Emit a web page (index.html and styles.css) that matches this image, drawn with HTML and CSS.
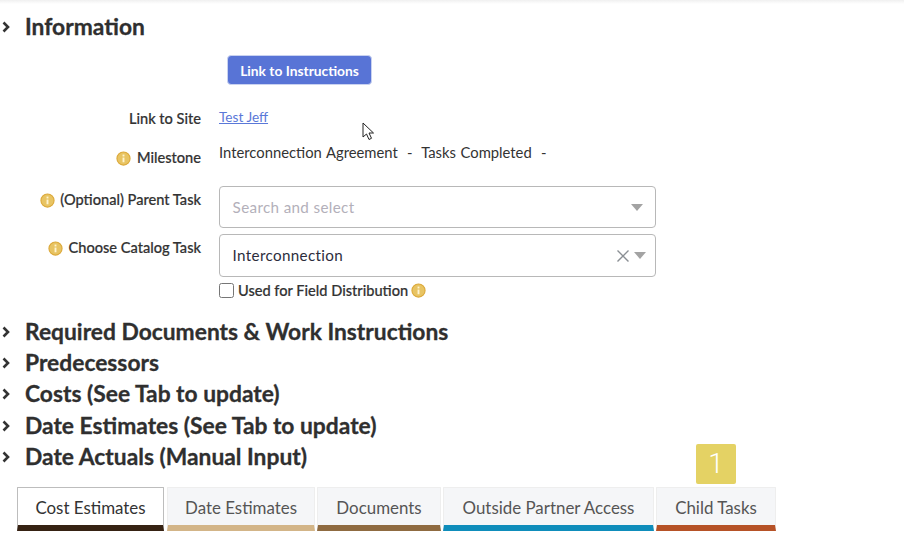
FILE: index.html
```html
<!DOCTYPE html>
<html lang="en">

<head>
    <meta charset="UTF-8">
    <title>Task Details</title>
    <link rel="stylesheet" href="styles.css">
</head>

<body>
    <div class="top-shadow"></div>

    <div class="section first">
        <svg class="chevron" viewBox="0 0 8 12"><path d="M1.5 1.5 L6 6 L1.5 10.5"/></svg>
        <h2>Information</h2>
    </div>

    <div class="form">
        <div class="row row-button">
            <div class="label"></div>
            <button class="btn-primary">Link to Instructions</button>
        </div>
        <div class="row row-site">
            <div class="label">Link to Site</div>
            <a class="value" href="#">Test Jeff</a>
        </div>
        <div class="row row-milestone">
            <div class="label">
                <svg class="info" viewBox="0 0 16 16"><circle cx="8" cy="8" r="7"/><rect x="7" y="7" width="2" height="5"/><rect x="7" y="3.8" width="2" height="2"/></svg>
                Milestone
            </div>
            <div class="value">Interconnection Agreement&nbsp; -&nbsp; Tasks Completed&nbsp; -</div>
        </div>
        <div class="row row-parent">
            <div class="label">
                <svg class="info" viewBox="0 0 16 16"><circle cx="8" cy="8" r="7"/><rect x="7" y="7" width="2" height="5"/><rect x="7" y="3.8" width="2" height="2"/></svg>
                (Optional) Parent Task
            </div>
            <div class="select">
                <span class="placeholder">Search and select</span>
                <span class="caret"></span>
            </div>
        </div>
        <div class="row row-catalog">
            <div class="label">
                <svg class="info" viewBox="0 0 16 16"><circle cx="8" cy="8" r="7"/><rect x="7" y="7" width="2" height="5"/><rect x="7" y="3.8" width="2" height="2"/></svg>
                Choose Catalog Task
            </div>
            <div class="select">
                <span class="selected">Interconnection</span>
                <svg class="clear" viewBox="0 0 12 12"><path d="M0.5 0.5 L11.5 11.5 M11.5 0.5 L0.5 11.5"/></svg>
                <span class="caret caret-near"></span>
            </div>
        </div>
        <div class="row row-check">
            <div class="label"></div>
            <label class="check">
                <input type="checkbox">
                <span>Used for Field Distribution</span>
                <svg class="info" viewBox="0 0 16 16"><circle cx="8" cy="8" r="7"/><rect x="7" y="7" width="2" height="5"/><rect x="7" y="3.8" width="2" height="2"/></svg>
            </label>
        </div>
    </div>

    <div class="sections">
        <div class="section">
            <svg class="chevron" viewBox="0 0 8 12"><path d="M1.5 1.5 L6 6 L1.5 10.5"/></svg>
            <h2>Required Documents &amp; Work Instructions</h2>
        </div>
        <div class="section">
            <svg class="chevron" viewBox="0 0 8 12"><path d="M1.5 1.5 L6 6 L1.5 10.5"/></svg>
            <h2>Predecessors</h2>
        </div>
        <div class="section">
            <svg class="chevron" viewBox="0 0 8 12"><path d="M1.5 1.5 L6 6 L1.5 10.5"/></svg>
            <h2>Costs (See Tab to update)</h2>
        </div>
        <div class="section">
            <svg class="chevron" viewBox="0 0 8 12"><path d="M1.5 1.5 L6 6 L1.5 10.5"/></svg>
            <h2>Date Estimates (See Tab to update)</h2>
        </div>
        <div class="section">
            <svg class="chevron" viewBox="0 0 8 12"><path d="M1.5 1.5 L6 6 L1.5 10.5"/></svg>
            <h2>Date Actuals (Manual Input)</h2>
        </div>
    </div>

    <div class="tabs">
        <div class="tab active tab-cost">Cost Estimates</div>
        <div class="tab tab-date">Date Estimates</div>
        <div class="tab tab-docs">Documents</div>
        <div class="tab tab-partner">Outside Partner Access</div>
        <div class="tab tab-child">Child Tasks<span class="badge">1</span></div>
    </div>

    <svg class="cursor" viewBox="0 0 13 20"><path d="M1 1 L1 15 L4.5 12 L7 17.5 L9.5 16.3 L7 11 L11.5 11 Z"/></svg>
</body>

</html>
```

FILE: styles.css
```css
* {
    box-sizing: border-box;
}

body {
    font-family: Lato, "Open Sans", sans-serif;
    background-color: #fff;
    color: #2f2f2f;
    margin: 0;
    height: 546px;
    overflow: hidden;
    position: relative;
}

.top-shadow {
    height: 4px;
    background: linear-gradient(#f0f0f0, #fff);
}

/* collapsible headings */
.section {
    display: flex;
    align-items: center;
    height: 31.25px;
}

.section.first {
    margin-top: 6px;
}

.section h2 {
    margin: 0;
    font-size: 22.8px;
    font-weight: 700;
    color: #2f2f2f;
    -webkit-text-stroke: 0.3px #2f2f2f;
}

.chevron {
    width: 8px;
    height: 12px;
    margin-top: 2px;
    margin-left: 2px;
    margin-right: 15px;
    fill: none;
    stroke: #333;
    stroke-width: 2.6;
}

.sections {
    margin-top: 15px;
}

/* form */
.row {
    display: flex;
}

.label {
    width: 201px;
    flex: none;
    margin-right: 18px;
    text-align: right;
    font-size: 14.6px;
    font-weight: 500;
    color: #333;
    -webkit-text-stroke: 0.2px #333;
}

.label .info {
    vertical-align: -3px;
    margin-right: 2px;
}

.info {
    width: 15px;
    height: 15px;
}

.info circle {
    fill: #e8c463;
    stroke: #dca93a;
    stroke-width: 1.2;
}

.info rect {
    fill: #fff3cf;
}

.value {
    font-size: 14.8px;
    word-spacing: 0.8px;
    color: #333;
}

.row-milestone .value {
    margin-top: -1px;
}

a.value {
    padding-top: 1px;
    font-size: 13.6px;
    word-spacing: 0;
    color: #5a78d8;
}

.row-button {
    margin-top: 14px;
    height: 30px;
}

.btn-primary {
    margin-left: 8px;
    width: 145px;
    height: 30px;
    padding: 0;
    background-color: #5874d6;
    border: 1px solid #c9d2f0;
    border-radius: 4px;
    color: #fff;
    font-family: inherit;
    font-size: 13.8px;
    font-weight: 700;
}

.row-site {
    margin-top: 23px;
    height: 20px;
}

.row-site .label {
    padding-top: 2px;
}

.row-milestone {
    margin-top: 16px;
    height: 20px;
}

.row-milestone .label {
    padding-top: 5px;
}

.row-parent {
    margin-top: 22px;
}

.row-parent .label {
    padding-top: 5px;
}

.row-catalog {
    margin-top: 6px;
}

.row-catalog .label {
    padding-top: 5px;
}

.select {
    position: relative;
    display: flex;
    align-items: center;
    width: 437px;
    height: 43px;
    padding-left: 12.6px;
    border: 1px solid #b8b8b8;
    border-radius: 4px;
    font-size: 15.2px;
    letter-spacing: 0.35px;
}

.row-parent .select {
    height: 42px;
}

.placeholder {
    color: #b3b0ba;
}

.selected {
    margin-bottom: 2px;
    color: #2c2c3c;
}

.caret {
    margin-left: auto;
    margin-right: 12px;
    border-left: 6px solid transparent;
    border-right: 6px solid transparent;
    border-top: 7px solid #a3a3a3;
}

.caret.caret-near {
    margin-left: 5px;
    margin-right: 9px;
}

.clear {
    margin-left: auto;
    width: 12px;
    height: 12px;
    fill: none;
    stroke: #8a8f94;
    stroke-width: 1.4;
}

.row-check {
    height: 23px;
}

.check {
    display: flex;
    align-items: flex-start;
    font-size: 14.6px;
    font-weight: 500;
    color: #333;
    -webkit-text-stroke: 0.2px #333;
}

.check input {
    width: 15px;
    height: 15px;
    margin: 6px 4px 0 0;
}

.check span {
    padding-top: 5px;
}

.check .info {
    margin: 6px 0 0 3px;
}

/* tabs */
.tabs {
    display: flex;
    margin-top: 15px;
    margin-left: 17px;
    gap: 2px;
}

.tab {
    position: relative;
    height: 44px;
    padding-top: 9px;
    text-align: center;
    font-size: 16.9px;
    color: #555;
    background-color: #f5f6f8;
    border: 1px solid #eeeeee;
    border-bottom: 6px solid #000;
    border-radius: 1px 1px 0 0;
}

.tab.active {
    background-color: #fff;
    color: #333;
    border-color: #bdbdbd;
}

.tab.tab-cost {
    width: 147px;
    margin-right: 1px;
    border-bottom-color: #362213;
}

.tab-date {
    width: 148px;
    border-bottom-color: #d3b588;
}

.tab-docs {
    width: 124px;
    border-bottom-color: #8f6b41;
}

.tab-partner {
    width: 211px;
    border-bottom-color: #0f8dbb;
}

.tab-child {
    width: 120px;
    border-bottom-color: #b65227;
}

.badge {
    position: absolute;
    left: 39px;
    top: -44px;
    width: 40px;
    height: 40px;
    background-color: #e4d264;
    border-radius: 2px;
    color: #fff;
    font-family: Roboto, sans-serif;
    font-size: 28px;
    font-weight: 300;
    line-height: 40px;
}

.cursor {
    position: absolute;
    left: 362px;
    top: 122px;
    width: 13px;
    height: 20px;
    fill: #fff;
    stroke: #222;
    stroke-width: 1;
}
```
